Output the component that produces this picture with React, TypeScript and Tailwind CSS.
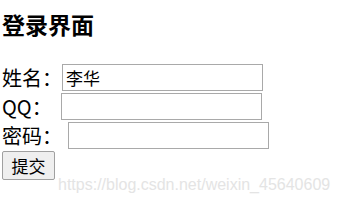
import React from 'react';

const cjk = '"Noto Sans CJK SC", sans-serif';

function Field({ label, value, gap }: { label: string; value?: string; gap: string }) {
  return (
    <div className="flex h-[29px] items-center">
      <span className="text-[20px] leading-none text-black" style={{ fontFamily: cjk }}>
        {label}
      </span>
      <input
        defaultValue={value}
        className={`${gap} h-[27px] w-[201px] border border-[#a9a9a9] bg-white px-[3px] text-[17px] text-black outline-none`}
        style={{ fontFamily: cjk }}
      />
    </div>
  );
}

export default function App() {
  return (
    <div className="relative h-[205px] w-[339px] overflow-hidden bg-white px-[2px]" style={{ fontFamily: cjk }}>
      <h3 className="pt-[8px] text-[23px] font-bold leading-[32px] text-black">登录界面</h3>

      <form className="mt-[23px] flex flex-col">
        <Field label="姓名：" value="李华" gap="ml-0" />
        <Field label="QQ：" gap="ml-[9px]" />
        <Field label="密码：" gap="ml-[6px]" />
        <div className="pt-[1px]">
          <button
            type="button"
            className="flex h-[29px] w-[53px] items-center justify-center rounded-[2px] border border-[#a0a0a0] bg-[#efefef] text-[17px] text-black"
          >
            提交
          </button>
        </div>
      </form>

      {/* CSDN watermark */}
      <span
        className="absolute left-[58px] top-[173px] text-[16px] text-[#e4e4e4]"
        style={{ fontFamily: '"Liberation Sans", Arial, sans-serif' }}
      >
        https://blog.csdn.net/weixin_45640609
      </span>
    </div>
  );
}
